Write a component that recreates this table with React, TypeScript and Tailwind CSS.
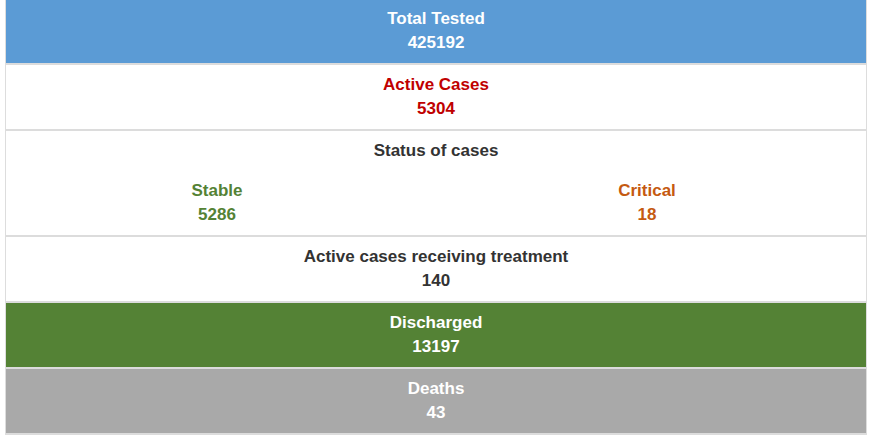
import React from 'react';

type Row = { label: string; value: string; bg: string; text: string; pt?: string };

const Stat: React.FC<{ label: string; value: string; className: string }> = ({ label, value, className }) => (
  <div className={`text-center leading-6 ${className}`}>
    <div>{label}</div>
    <div>{value}</div>
  </div>
);

const App: React.FC = () => {
  const top: Row[] = [
    { label: 'Total Tested', value: '425192', bg: 'bg-[#5b9bd5]', text: 'text-white', pt: 'pt-[7px]' },
    { label: 'Active Cases', value: '5304', bg: 'bg-white', text: 'text-[#c00000]' },
  ];

  return (
    <div className="min-h-screen bg-white font-['Liberation_Sans',Arial,sans-serif] text-[17px] font-bold">
      <div className="ml-[5px] w-[862px] border-x border-[#dddddd]">
        {top.map((r) => (
          <div key={r.label} className={`${r.bg} ${r.pt ?? 'pt-2'} pb-2 border-b-2 border-[#dcdcdc]`}>
            <Stat label={r.label} value={r.value} className={r.text} />
          </div>
        ))}

        <div className="bg-white pt-2 pb-2 border-b-2 border-[#dcdcdc]">
          <div className="text-center leading-6 text-[#333333]">Status of cases</div>
          <div className="mt-4 grid grid-cols-[422px_1fr]">
            <Stat label="Stable" value="5286" className="text-[#548235]" />
            <Stat label="Critical" value="18" className="text-[#c55a11]" />
          </div>
        </div>

        <div className="bg-white pt-2 pb-2 border-b-2 border-[#dcdcdc]">
          <Stat label="Active cases receiving treatment" value="140" className="text-[#333333]" />
        </div>

        <div className="bg-[#548235] pt-2 pb-2 border-b-2 border-[#dcdcdc]">
          <Stat label="Discharged" value="13197" className="text-white" />
        </div>

        <div className="bg-[#a9a9a9] pt-2 pb-2 border-b-2 border-[#dcdcdc]">
          <Stat label="Deaths" value="43" className="text-white" />
        </div>
      </div>
    </div>
  );
};

export default App;
